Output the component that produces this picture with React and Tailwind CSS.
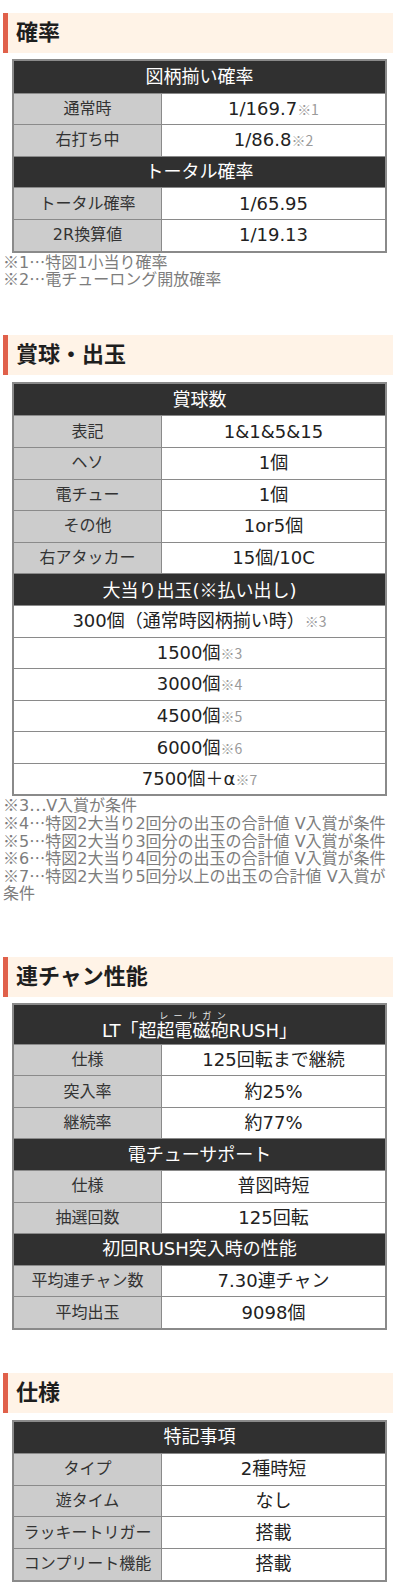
import React from "react";

const FONT = "font-['DejaVu_Sans','Noto_Sans_CJK_JP',sans-serif]";

function J({ children }) {
  return <span className="font-['Noto_Sans_CJK_JP',sans-serif]">{children}</span>;
}

function Heading({ children, className }) {
  return (
    <div
      className={
        "ml-[3px] mr-[7px] flex h-[40px] items-center border-l-[5px] border-[#e0604a] bg-[#fff3e7] pl-[8px] text-[22px] font-bold leading-none text-[#1e1e1e] " +
        className
      }
    >
      {children}
    </div>
  );
}

function Table({ children, className }) {
  return (
    <div className={"ml-[12px] w-[375px] border-2 border-[#8a8a8a] " + className}>
      {children}
    </div>
  );
}

function Head({ children, first }) {
  return (
    <div
      className={
        first
          ? "flex h-[31.6px] items-center justify-center bg-[#303030] text-[18px] leading-[20px] text-white"
          : "flex h-[31.6px] items-center justify-center border-t border-[#8a8a8a] bg-[#303030] text-[18px] leading-[20px] text-white"
      }
    >
      <span>{children}</span>
    </div>
  );
}

function Note({ children }) {
  return (
    <span className="font-['Noto_Sans_CJK_JP',sans-serif] text-[14px] text-[#9a9a9a]">
      {children}
    </span>
  );
}

function Row({ label, children }) {
  return (
    <div className="grid h-[31.6px] grid-cols-[148px_1fr] border-t border-[#8a8a8a]">
      <div className="flex items-center justify-center border-r border-[#8a8a8a] bg-[#cccccc] text-[16px] leading-[20px] text-[#333]">
        <span>{label}</span>
      </div>
      <div className="flex items-center justify-center bg-white text-[18px] leading-[20px] text-[#222]">
        <span>{children}</span>
      </div>
    </div>
  );
}

function Full({ children }) {
  return (
    <div className="flex h-[31.6px] items-center justify-center border-t border-[#8a8a8a] bg-white text-[18px] leading-[20px] text-[#222]">
      <span>{children}</span>
    </div>
  );
}

function Line({ children, tall }) {
  return (
    <div className={tall ? "h-[35.2px]" : "h-[17.6px]"}>
      {children}
    </div>
  );
}

function Notes({ children }) {
  return (
    <div className="pl-[3px] pr-[5px] text-[16px] leading-[17.6px] text-[#7d7d7d]">
      {children}
    </div>
  );
}

export default function App() {
  return (
    <div className={"w-[400px] bg-white pt-[13px] pb-[8px] " + FONT}>
      <Heading className="">確率</Heading>
      <Table className="mt-[6px]">
        <Head first>図柄揃い確率</Head>
        <Row label="通常時">
          1/169.7<Note>※1</Note>
        </Row>
        <Row label="右打ち中">
          1/86.8<Note>※2</Note>
        </Row>
        <Head>トータル確率</Head>
        <Row label="トータル確率">1/65.95</Row>
        <Row label="2R換算値">1/19.13</Row>
      </Table>
      <Notes>
        <Line>
          <J>※</J>1<J>…</J>特図1小当り確率
        </Line>
        <Line>
          <J>※</J>2<J>…</J>電チューロング開放確率
        </Line>
      </Notes>

      <Heading className="mt-[47px]">賞球・出玉</Heading>
      <Table className="mt-[7px]">
        <Head first>賞球数</Head>
        <Row label="表記">1&amp;1&amp;5&amp;15</Row>
        <Row label="ヘソ">1個</Row>
        <Row label="電チュー">1個</Row>
        <Row label="その他">1or5個</Row>
        <Row label="右アタッカー">15個/10C</Row>
        <Head>
          大当り出玉(<J>※</J>払い出し)
        </Head>
        <Full>
          300個（通常時図柄揃い時）<Note>※3</Note>
        </Full>
        <Full>
          1500個<Note>※3</Note>
        </Full>
        <Full>
          3000個<Note>※4</Note>
        </Full>
        <Full>
          4500個<Note>※5</Note>
        </Full>
        <Full>
          6000個<Note>※6</Note>
        </Full>
        <Full>
          7500個＋α<Note>※7</Note>
        </Full>
      </Table>
      <Notes>
        <Line>
          <J>※</J>3<J>…</J>V入賞が条件
        </Line>
        <Line>
          <J>※</J>4<J>…</J>特図2大当り2回分の出玉の合計値 V入賞が条件
        </Line>
        <Line>
          <J>※</J>5<J>…</J>特図2大当り3回分の出玉の合計値 V入賞が条件
        </Line>
        <Line>
          <J>※</J>6<J>…</J>特図2大当り4回分の出玉の合計値 V入賞が条件
        </Line>
        <Line tall>
          <J>※</J>7<J>…</J>特図2大当り5回分以上の出玉の合計値 V入賞が条件
        </Line>
      </Notes>

      <Heading className="mt-[54.6px]">連チャン性能</Heading>
      <Table className="mt-[6px]">
        <div className="flex h-[39px] items-center justify-center bg-[#303030] pt-[3px] text-[18px] leading-[20px] text-white">
          <span>
            LT「超
            <ruby>
              超電磁砲
              <rt className="text-[9px] leading-[10px] text-[#e8e8e8]">レールガン</rt>
            </ruby>
            RUSH」
          </span>
        </div>
        <Row label="仕様">125回転まで継続</Row>
        <Row label="突入率">約25%</Row>
        <Row label="継続率">約77%</Row>
        <Head>電チューサポート</Head>
        <Row label="仕様">普図時短</Row>
        <Row label="抽選回数">125回転</Row>
        <Head>初回RUSH突入時の性能</Head>
        <Row label="平均連チャン数">7.30連チャン</Row>
        <Row label="平均出玉">9098個</Row>
      </Table>

      <Heading className="mt-[42.6px]">仕様</Heading>
      <Table className="mt-[7px]">
        <Head first>特記事項</Head>
        <Row label="タイプ">2種時短</Row>
        <Row label="遊タイム">なし</Row>
        <Row label="ラッキートリガー">搭載</Row>
        <Row label="コンプリート機能">搭載</Row>
      </Table>
    </div>
  );
}
